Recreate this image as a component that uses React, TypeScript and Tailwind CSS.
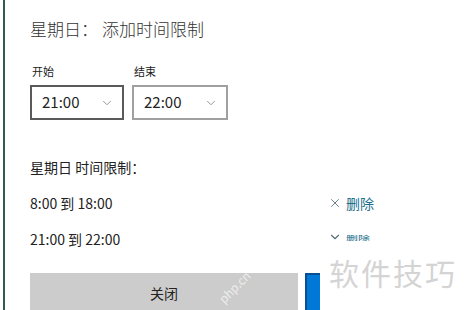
import { ChevronDown, X } from "lucide-react";

const font = { fontFamily: '"Noto Sans CJK SC", "Microsoft YaHei", sans-serif' };

function TimeSelect({ value, dark }: { value: string; dark?: boolean }) {
  return (
    <div
      className={`flex h-[35px] items-center justify-between border-2 bg-white pl-[10px] pr-[8px] ${
        dark ? "w-[94px] border-[#5a5a5a]" : "w-[96px] border-[#a0a0a0]"
      }`}
    >
      <span className="text-[15px] text-[#222]">{value}</span>
      <ChevronDown size={14} strokeWidth={1.5} className="text-[#888]" />
    </div>
  );
}

export default function App() {
  return (
    <div className="relative h-[310px] w-[465px] overflow-hidden bg-white" style={font}>
      <div className="flex h-full">
        <div className="ml-[3px] w-[2px] shrink-0 bg-[#2f5a55]" />
        <div className="flex-1 pl-[25px] pt-[15px]">
          <div className="flex h-[26px] items-center text-[17px] font-light leading-none text-[#333]">
            <span>星期日</span>
            <span className="mr-[4px]">：</span>
            <span>添加时间限制</span>
          </div>

          <div className="mt-[22px] flex gap-[8px]">
            <div className="flex flex-col">
              <span className="pl-[2px] text-[11px] leading-[16px] text-[#222]">开始</span>
              <div className="mt-[6px]">
                <TimeSelect value="21:00" dark />
              </div>
            </div>
            <div className="flex flex-col">
              <span className="pl-[2px] text-[11px] leading-[16px] text-[#222]">结束</span>
              <div className="mt-[6px]">
                <TimeSelect value="22:00" />
              </div>
            </div>
          </div>

          <div className="mt-[37px] text-[14px] leading-[20px] text-[#222]">星期日 时间限制：</div>

          <div className="mt-[16px] flex h-[20px] items-center text-[14px] text-[#222]">
            <span className="w-[298px]">8:00 到 18:00</span>
            <span className="flex items-center gap-[4px] text-[#1d6f8c]">
              <X size={14} strokeWidth={1.5} className="text-[#5a6f7a]" />
              删除
            </span>
          </div>

          <div className="mt-[16px] flex h-[20px] items-center text-[14px] text-[#222]">
            <span className="w-[298px]">21:00 到 22:00</span>
            <span className="flex items-center gap-[4px] text-[#1d6f8c]">
              <ChevronDown size={14} strokeWidth={2} className="-mt-[4px] text-[#5a6f7a]" />
              <span className="-mt-[4px] block scale-y-50 text-[12px] leading-[12px]">删除</span>
            </span>
          </div>

          <div className="mt-[24px] flex gap-[7px]">
            <div className="flex h-[40px] w-[268px] items-center justify-center bg-[#cccccc] text-[14px] text-[#222]">
              关闭
            </div>
            <div className="h-[40px] flex-1 border-2 border-[#0a4f8f] bg-[#0078d7]" />
          </div>
        </div>
      </div>

      <div className="absolute left-[320px] top-[250px] flex h-[60px] w-[145px] items-start bg-white pl-[9px] pt-[2px]">
        <span className="whitespace-nowrap text-[30px] leading-[40px] tracking-[2px] text-[#d4d4d4]">软件技巧</span>
      </div>
      <div className="pointer-events-none absolute left-[215px] top-[278px] -rotate-45 whitespace-nowrap text-[12px] text-[#ececec]">
        php.cn
      </div>
    </div>
  );
}
